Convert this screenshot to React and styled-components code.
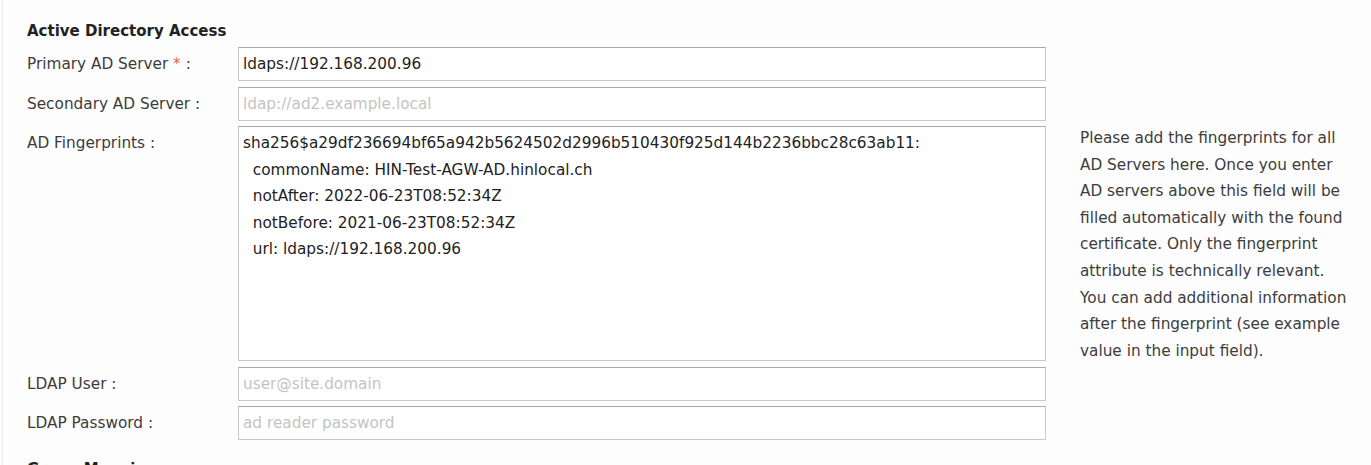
import React from "react";
import styled, { createGlobalStyle } from "styled-components";

const Global = createGlobalStyle`
  html, body { margin: 0; padding: 0; background: #fdfdfd; }
  body { font-family: "DejaVu Sans", Verdana, sans-serif; font-size: 15.3px; color: #3a3a3a; }
`;

const Page = styled.div`
  min-height: 465px;
  box-sizing: border-box;
  margin-left: 2px;
  border-left: 1px solid #ececec;
  padding: 21px 0 0 24px;
  background: #fdfdfd;
`;

const SectionTitle = styled.h3`
  margin: ${(p) => p.$mt || 0}px 0 ${(p) => p.$mb || 0}px 0;
  font-size: 15px;
  line-height: 20px;
  font-weight: bold;
  color: #222;
`;

const Form = styled.div`
  display: grid;
  grid-template-columns: 211px 808px 306px;
  grid-template-rows: 34px 34px 235px 34px 34px;
  row-gap: 5.5px;
`;

const Label = styled.label`
  grid-column: 1;
  display: flex;
  align-items: ${(p) => (p.$top ? "flex-start" : "center")};
  padding-top: ${(p) => (p.$top ? "7px" : "0")};
  line-height: 20px;
  color: #3c3c3c;
  white-space: pre;
`;

const Required = styled.span`
  color: #ee5a5a;
`;

const fieldBase = `
  grid-column: 2;
  box-sizing: border-box;
  width: 808px;
  margin: 0;
  border: 1px solid #c9c9c9;
  border-top-color: #a9a9a9;
  border-radius: 0;
  background: #fff;
  font-family: "DejaVu Sans", Verdana, sans-serif;
  font-size: 15.3px;
  color: #222;
  outline: none;
`;

const TextInput = styled.input`
  ${fieldBase}
  height: 34px;
  padding: 0 4px;
  &::placeholder { color: #c4c4c4; }
`;

const TextArea = styled.textarea`
  ${fieldBase}
  height: 235px;
  padding: 3px 4px;
  line-height: 26.5px;
  resize: none;
  overflow: hidden;
`;

const Help = styled.div`
  grid-column: 3;
  align-self: start;
  padding-left: 34px;
  margin-top: -1px;
  width: 272px;
  line-height: 26.6px;
  color: #3c3c3c;
`;

const Spacer = styled.div`
  grid-column: 3;
`;

const fingerprint = `sha256$a29df236694bf65a942b5624502d2996b510430f925d144b2236bbc28c63ab11:
  commonName: HIN-Test-AGW-AD.hinlocal.ch
  notAfter: 2022-06-23T08:52:34Z
  notBefore: 2021-06-23T08:52:34Z
  url: ldaps://192.168.200.96`;

export default function App() {
  return (
    <>
      <Global />
      <Page>
        <SectionTitle $mb={6}>Active Directory Access</SectionTitle>
        <Form>
          <Label>
            {"Primary AD Server "}<Required>*</Required>{" :"}
          </Label>
          <TextInput defaultValue="ldaps://192.168.200.96" />
          <Spacer />

          <Label>Secondary AD Server :</Label>
          <TextInput placeholder="ldap://ad2.example.local" />
          <Spacer />

          <Label $top>AD Fingerprints :</Label>
          <TextArea defaultValue={fingerprint} spellCheck={false} />
          <Help>
            Please add the fingerprints for all AD Servers here. Once you enter
            AD servers above this field will be filled automatically with the
            found certificate. Only the fingerprint attribute is technically
            relevant. You can add additional information after the fingerprint
            (see example value in the input field).
          </Help>

          <Label>LDAP User :</Label>
          <TextInput placeholder="user@site.domain" />
          <Spacer />

          <Label>LDAP Password :</Label>
          <TextInput type="password" placeholder="ad reader password" />
          <Spacer />
        </Form>
        <SectionTitle $mt={19}>Group Mapping</SectionTitle>
      </Page>
    </>
  );
}
